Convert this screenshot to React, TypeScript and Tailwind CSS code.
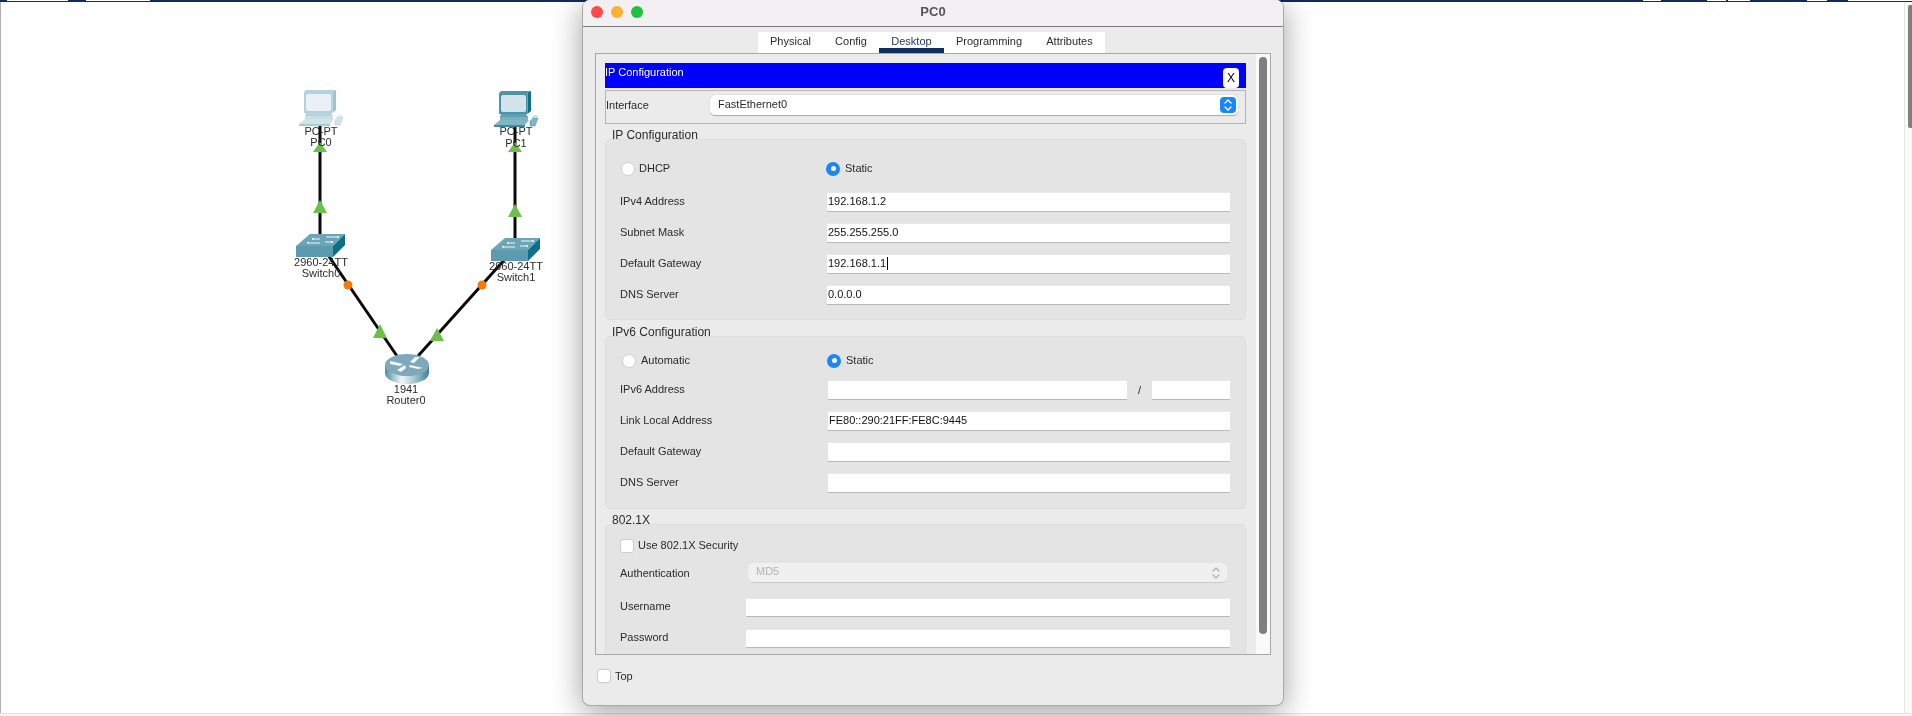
import React from "react";

function Pc({ x, y, dark }: { x: number; y: number; dark: boolean }) {
  const top = dark ? "#4f93a8" : "#b5d3dd";
  const side = dark ? "#0f7088" : "#9cc4d0";
  const frame = dark ? "#4f93a8" : "#b3d2dc";
  const screen = dark ? "#d3e3ea" : "#e9f1f5";
  const base = dark ? "#5f9fb2" : "#b6d5df";
  const key = dark ? "#83b4c4" : "#cfe4ea";
  const keyEdge = dark ? "#3f8aa1" : "#a7ccd6";
  return (
    <g transform={`translate(${x} ${y})`}>
      <polygon points="5,2 7,0 37,0 33.5,2" fill={top} />
      <polygon points="33.5,2 37,0 37,20 33.5,23" fill={side} />
      <rect x="5" y="2" width="28.5" height="21" fill={frame} />
      <rect x="7" y="4" width="25" height="17" rx="2" fill={screen} />
      <polygon points="7,23 32,23 34,26 6,26" fill={base} />
      <polygon points="6,26 34,26 34,29 6,29" fill={side} opacity="0.55" />
      <polygon points="0,34 6,29 35,29 31,34" fill={key} />
      <polygon points="0,34 31,34 31,36 0,36" fill={keyEdge} />
      <path d="M36 30 L40 27 L44 27 L41 35 L36 35 Z" fill={key} stroke={keyEdge} strokeWidth="0.5" />
      <path d="M38 28 C39 25 42 24 43 26" fill="none" stroke={keyEdge} strokeWidth="0.6" />
    </g>
  );
}

function SwitchIcon({ x, y }: { x: number; y: number }) {
  return (
    <g transform={`translate(${x} ${y})`}>
      <polygon points="0,12 14,0 49,0 37,12" fill="#6da5b8" />
      <polygon points="0,12 37,12 37,23 0,23" fill="#5b9bb0" />
      <polygon points="37,12 49,0 49,11 37,23" fill="#0d6f8b" />
      <g stroke="#eef6f8" strokeWidth="1" fill="none">
        <path d="M16 5 H24 M30 3 H43 M12 9 H24 M29 8 H37" />
      </g>
      <g fill="#eef6f8">
        <circle cx="17" cy="4.8" r="1" />
        <circle cx="42" cy="3" r="1" />
        <circle cx="12" cy="8.8" r="1" />
        <circle cx="36" cy="8" r="1" />
      </g>
    </g>
  );
}

function RouterIcon({ x, y }: { x: number; y: number }) {
  return (
    <g transform={`translate(${x} ${y})`}>
      <defs>
        <linearGradient id="routerBody" x1="0" x2="1" y1="0" y2="0">
          <stop offset="0" stopColor="#4f8ea3" />
          <stop offset="0.38" stopColor="#eef6f7" />
          <stop offset="0.65" stopColor="#a9cbd4" />
          <stop offset="1" stopColor="#3f8298" />
        </linearGradient>
      </defs>
      <path d="M0 11 V19 A22 11 0 0 0 44 19 V11 Z" fill="url(#routerBody)" />
      <ellipse cx="22" cy="11" rx="22" ry="11" fill="#7ea9ba" />
      <g fill="#f4f9fa">
        <polygon points="5,7 18,10 15,12 5,10" />
        <polygon points="25,8 30,3 35,3 29,9" />
        <polygon points="25,11 38,14 33,15 24,13" />
        <polygon points="12,16 20,11 21,14 16,18" />
      </g>
    </g>
  );
}

function Topology() {
  const tri = (cx: number, top: number, bottom: number) => `${cx},${top} ${cx - 7},${bottom} ${cx + 7},${bottom}`;
  return (
    <svg className="absolute left-0 top-0" width="600" height="420">
      <g stroke="#0a0a0a" strokeWidth="3" fill="none">
        <line x1="320" y1="125" x2="320" y2="236" />
        <line x1="515" y1="125" x2="515" y2="240" />
        <line x1="328" y1="255" x2="397" y2="356" />
        <line x1="506" y1="258" x2="418" y2="356" />
      </g>
      <polygon points={tri(320, 142, 152)} fill="#6cc04a" />
      <polygon points={tri(320, 200, 213)} fill="#6cc04a" />
      <polygon points={tri(515, 142, 152)} fill="#6cc04a" />
      <polygon points={tri(515, 204, 217)} fill="#6cc04a" />
      <polygon points={tri(380, 324, 338)} fill="#6cc04a" />
      <polygon points={tri(437, 328, 341)} fill="#6cc04a" />
      <circle cx="348" cy="285" r="4.5" fill="#f57a0c" />
      <circle cx="482" cy="285" r="4.5" fill="#f57a0c" />
      <Pc x={299} y={90} dark={false} />
      <Pc x={494} y={91} dark={true} />
      <SwitchIcon x={296} y={234} />
      <SwitchIcon x={491} y={238} />
      <RouterIcon x={385} y={354} />
    </svg>
  );
}

function Radio({ on }: { on?: boolean }) {
  return on ? (
    <span className="flex h-[14px] w-[14px] items-center justify-center rounded-full bg-[#1a86fb]">
      <span className="h-[5px] w-[5px] rounded-full bg-white" />
    </span>
  ) : (
    <span className="block h-[14px] w-[14px] rounded-full border border-[#cfcfcf] bg-white" />
  );
}

function Box({ className }: { className: string }) {
  return <span className={`block rounded-[3px] border border-[#cdcdcd] bg-white ${className}`} />;
}

function Input({ className, children }: { className: string; children?: React.ReactNode }) {
  return (
    <div className={`flex h-[20px] items-center border-b border-t border-b-[#b9b9b9] border-t-[#e8e8e8] bg-white pb-[1px] pl-[1px] text-[11px] text-[#111] ${className}`}>
      {children}
    </div>
  );
}

function Field({ label, value, caret }: { label: string; value?: string; caret?: boolean }) {
  return (
    <div className="mt-[11px] flex items-center first:mt-0">
      <span className="w-[207px] shrink-0 pb-[1px]">{label}</span>
      <Input className="w-[403px]">
        {value}
        {caret && <span className="ml-[1px] inline-block h-[13px] w-px bg-black" />}
      </Input>
    </div>
  );
}

function Chevrons({ color }: { color: string }) {
  return (
    <svg width="10" height="14" viewBox="0 0 10 14" fill="none" stroke={color} strokeWidth="1.4" strokeLinecap="round" strokeLinejoin="round">
      <path d="M2 5 L5 2 L8 5" />
      <path d="M2 9 L5 12 L8 9" />
    </svg>
  );
}

function GroupLabel({ text, h, pt }: { text: string; h: string; pt: string }) {
  return <div className={`pl-[7px] text-[12px] leading-[12px] ${h} ${pt}`}>{text}</div>;
}

const panel = "rounded-[5px] border border-[#dddddd] bg-[#e4e4e4]";

function ConfigWindow() {
  return (
    <div className="absolute left-[582px] top-0 z-10 flex h-[706px] w-[702px] flex-col overflow-hidden rounded-b-[8px] rounded-t-[8px] border-x border-b border-[#a9a9a9] bg-[#ebebeb] text-[11px] text-[#2b2b2b] shadow-[0_6px_30px_rgba(0,0,0,0.38)]">
      <div className="relative flex h-[27px] shrink-0 items-center justify-center border-b border-[#7b7b7b] bg-[#f2f0f3]">
        <div className="absolute left-[8px] top-[6px] flex gap-[8px]">
          <span className="h-[12px] w-[12px] rounded-full bg-[#fc4b47]" />
          <span className="h-[12px] w-[12px] rounded-full bg-[#fdb12e]" />
          <span className="h-[12px] w-[12px] rounded-full bg-[#1fc13f]" />
        </div>
        <span className="pb-[2px] text-[13px] font-bold text-[#555]">PC0</span>
      </div>

      <div className="ml-[175px] mt-[5px] flex h-[21px] w-[347px] shrink-0 bg-white leading-[19px]">
        <div className="w-[65px] text-center">Physical</div>
        <div className="w-[56px] text-center">Config</div>
        <div className="w-[65px] border-b-[5px] border-[#0f2d5a] text-center text-[#1c3a63]">Desktop</div>
        <div className="w-[90px] text-center">Programming</div>
        <div className="w-[71px] text-center">Attributes</div>
      </div>

      <div className="ml-[12px] flex h-[602px] w-[676px] shrink-0 overflow-hidden border border-[#a8a8a8]">
        <div className="w-[660px] shrink-0 pl-[9px] pr-[10px] pt-[9px]">
          <div className="flex h-[25px] items-end justify-between bg-[#0000ff] text-white">
            <span className="self-start leading-[18px]">IP Configuration</span>
            <span className="mr-[7px] flex h-[20px] w-[16px] items-center justify-center rounded-[4px] bg-white text-[12px] text-black">X</span>
          </div>

          <div className="mt-[2px] flex h-[34px] border border-[#b4b4b4] pt-[4px]">
            <span className="w-[104px] shrink-0 leading-[20px]">Interface</span>
            <div className="flex h-[21px] w-[528px] items-center justify-between rounded-[5px] border-b border-b-[#b0b0b0] bg-white pl-[8px] pr-[2px] shadow-[0_0_1px_rgba(0,0,0,0.3)]">
              <span className="pb-[2px]">FastEthernet0</span>
              <span className="flex h-[16px] w-[16px] items-center justify-center rounded-[4px] bg-[#1a86fb]">
                <Chevrons color="#ffffff" />
              </span>
            </div>
          </div>

          <GroupLabel text="IP Configuration" h="h-[15px]" pt="pt-[5px]" />
          <div className={`${panel} h-[181px] pl-[14px] pt-[22px]`}>
            <div className="flex h-[14px] items-center pb-[1px]">
              <span className="ml-[1px]"><Radio /></span>
              <span className="ml-[4px] w-[187px]">DHCP</span>
              <Radio on />
              <span className="ml-[5px]">Static</span>
            </div>
            <div className="mt-[16px]">
              <Field label="IPv4 Address" value="192.168.1.2" />
              <Field label="Subnet Mask" value="255.255.255.0" />
              <Field label="Default Gateway" value="192.168.1.1" caret />
              <Field label="DNS Server" value="0.0.0.0" />
            </div>
          </div>

          <GroupLabel text="IPv6 Configuration" h="h-[16px]" pt="pt-[6px]" />
          <div className={`${panel} h-[173px] pl-[14px] pt-[17px]`}>
            <div className="flex h-[14px] items-center pb-[1px]">
              <span className="ml-[2px]"><Radio /></span>
              <span className="ml-[5px] w-[186px]">Automatic</span>
              <Radio on />
              <span className="ml-[5px]">Static</span>
            </div>
            <div className="mt-[12px]">
              <div className="flex items-center">
                <span className="w-[208px] shrink-0 pb-[1px]">IPv6 Address</span>
                <Input className="w-[299px]" />
                <span className="w-[25px] text-center">/</span>
                <Input className="w-[78px]" />
              </div>
              <div className="mt-[11px] flex items-center">
                <span className="w-[208px] shrink-0 pb-[1px]">Link Local Address</span>
                <Input className="w-[402px]">FE80::290:21FF:FE8C:9445</Input>
              </div>
              <div className="mt-[11px] flex items-center">
                <span className="w-[208px] shrink-0 pb-[1px]">Default Gateway</span>
                <Input className="w-[402px]" />
              </div>
              <div className="mt-[11px] flex items-center">
                <span className="w-[208px] shrink-0 pb-[1px]">DNS Server</span>
                <Input className="w-[402px]" />
              </div>
            </div>
          </div>

          <GroupLabel text="802.1X" h="h-[15px]" pt="pt-[5px]" />
          <div className={`${panel} h-[160px] pl-[14px] pt-[14px]`}>
            <div className="flex h-[14px] items-center">
              <Box className="h-[14px] w-[14px]" />
              <span className="ml-[4px] pb-[1px]">Use 802.1X Security</span>
            </div>
            <div className="mt-[10px] flex h-[20px] items-center">
              <span className="w-[128px] shrink-0">Authentication</span>
              <div className="flex h-[20px] w-[479px] items-center justify-between rounded-[5px] border-b border-b-[#c9c9c9] bg-[#f0f0f0] pl-[8px] pr-[6px] text-[#b3b3b3]">
                <span className="pb-[2px]">MD5</span>
                <Chevrons color="#b5b5b5" />
              </div>
            </div>
            <div className="mt-[15px] flex h-[19px] items-center">
              <span className="w-[126px] shrink-0 pb-[2px]">Username</span>
              <Input className="!h-[19px] w-[484px]" />
            </div>
            <div className="mt-[12px] flex h-[19px] items-center">
              <span className="w-[126px] shrink-0 pb-[2px]">Password</span>
              <Input className="!h-[19px] w-[484px]" />
            </div>
          </div>
        </div>
        <div className="w-[14px] shrink-0 bg-[#fafafa] pl-[3px] pt-[3px]">
          <div className="h-[577px] w-[8px] rounded-full bg-[#7f7f7f]" />
        </div>
      </div>

      <div className="ml-[14px] mt-[14px] flex h-[14px] items-center">
        <Box className="h-[14px] w-[14px]" />
        <span className="ml-[4px]">Top</span>
      </div>
    </div>
  );
}

export default function App() {
  return (
    <div className="relative flex h-[716px] w-[1912px] flex-col overflow-hidden bg-white font-['Liberation_Sans',Arial,sans-serif] blur-[0.35px]">
      <div className="relative h-[2px] shrink-0 bg-[#0f2d5a]">
        <span className="absolute left-[7px] top-0 h-px w-[61px] bg-white" />
        <span className="absolute left-[86px] top-0 h-px w-[64px] bg-white" />
        <span className="absolute left-[1643px] top-0 h-px w-[18px] bg-white" />
        <span className="absolute left-[1707px] top-0 h-px w-[19px] bg-white" />
        <span className="absolute left-[1728px] top-0 h-px w-[22px] bg-white" />
        <span className="absolute left-[1807px] top-0 h-px w-[20px] bg-white" />
        <span className="absolute left-[1848px] top-0 h-px w-[64px] bg-white" />
      </div>

      <div className="flex min-h-0 flex-1">
        <div className="w-px shrink-0 bg-[#b0b0b0]" />
        <div className="relative flex-1" />
        <div className="w-[8px] shrink-0 border-l border-[#e6e6e6] bg-[#fafafa] pl-[3px] pt-[3px]">
          <div className="h-[123px] w-[4px] rounded-l-[2px] bg-[#7f7f7f]" />
        </div>
      </div>

      <div className="h-[3px] shrink-0 border-t border-[#e3e3e3] bg-[#f6f6f6]" />

      <Topology />

      <div className="absolute left-[321px] top-[126px] -translate-x-1/2 text-center text-[11px] leading-[11px] text-[#2b2b2b]">PC-PT<br />PC0</div>
      <div className="absolute left-[516px] top-[126px] -translate-x-1/2 text-center text-[11px] leading-[11.5px] text-[#2b2b2b]">PC-PT<br />PC1</div>
      <div className="absolute left-[321px] top-[257px] -translate-x-1/2 whitespace-nowrap text-center text-[11px] leading-[11px] text-[#2b2b2b]">2960-24TT<br />Switch0</div>
      <div className="absolute left-[516px] top-[261px] -translate-x-1/2 whitespace-nowrap text-center text-[11px] leading-[11px] text-[#2b2b2b]">2960-24TT<br />Switch1</div>
      <div className="absolute left-[406px] top-[384px] -translate-x-1/2 text-center text-[11px] leading-[11px] text-[#2b2b2b]">1941<br />Router0</div>

      <ConfigWindow />
    </div>
  );
}
